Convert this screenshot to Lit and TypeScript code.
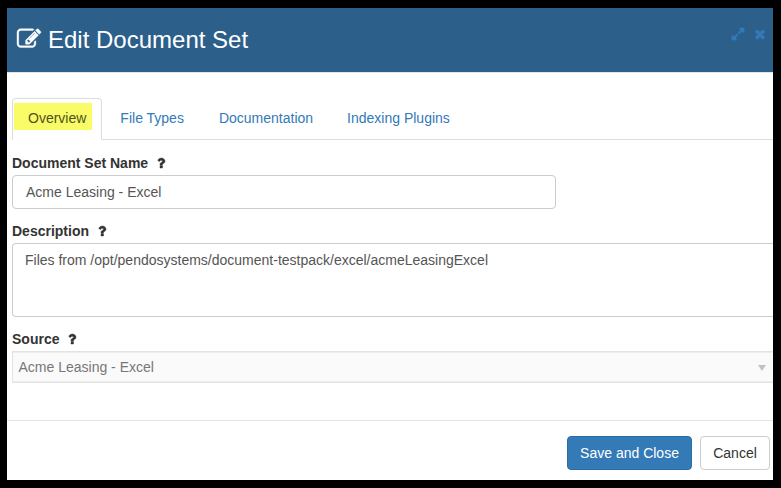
import { LitElement, html, css, svg } from "lit";
import { customElement, property, state } from "lit/decorators.js";

const ICONS: Record<string, string> = {
  edit: "M888 1184l116-116-152-152-116 116v56h96v96h56zm440-720q-16-16-33 1l-350 350q-17 17-1 33t33-1l350-350q17-17 1-33zm80 594v190q0 119-84.5 203.5t-203.5 84.5h-832q-119 0-203.5-84.5t-84.5-203.5v-832q0-119 84.5-203.5t203.5-84.5h832q63 0 117 25 15 7 18 23 3 17-9 29l-49 49q-14 14-32 8-23-6-45-6h-832q-66 0-113 47t-47 113v832q0 66 47 113t113 47h832q66 0 113-47t47-113v-126q0-13 9-22l64-64q15-15 35-7t20 29zm-96-738l288 288-672 672h-288v-288zm444 132l-92 92-288-288 92-92q28-28 68-28t68 28l152 152q28 28 28 68t-28 68z",
  help: "M1088 1256v240q0 16-12 28t-28 12h-240q-16 0-28-12t-12-28v-240q0-16 12-28t28-12h240q16 0 28 12t12 28zm316-600q0 54-15.5 101t-35 76.5-55 59.5-57.5 43.5-61 35.5q-41 23-68.5 65t-27.5 67q0 17-12 32.5t-28 15.5h-240q-15 0-25.5-18.5t-10.5-37.5v-45q0-83 65-156.5t143-108.5q59-27 84-56t25-76q0-42-46.5-74t-107.5-32q-65 0-108 29-35 25-107 115-13 16-31 16-12 0-25-8l-164-125q-13-10-15.5-25t5.5-28q160-266 464-266 80 0 161 31t146 83 106 127.5 41 158.5z",
  expand: "M883 1056q0 13-10 23l-332 332 144 144q19 19 19 45t-19 45-45 19h-448q-26 0-45-19t-19-45v-448q0-26 19-45t45-19 45 19l144 144 332-332q10-10 23-10t23 10l114 114q10 10 10 23zm781-864v448q0 26-19 45t-45 19-45-19l-144-144-332 332q-10 10-23 10t-23-10l-114-114q-10-10-10-23t10-23l332-332-144-144q-19-19-19-45t19-45 45-19h448q26 0 45 19t19 45z",
  close: "M1490 1322q0 40-28 68l-136 136q-28 28-68 28t-68-28l-294-294-294 294q-28 28-68 28t-68-28l-136-136q-28-28-28-68t28-68l294-294-294-294q-28-28-28-68t28-68l136-136q28-28 68-28t68 28l294 294 294-294q28-28 68-28t68 28l136 136q28 28 28 68t-28 68l-294 294 294 294q28 28 28 68z",
};

@customElement("ui-icon")
class UiIcon extends LitElement {
  @property() name = "";
  static styles = css`
    :host { display: block; width: 14px; height: 14px; flex: none; }
    svg { display: block; width: 100%; height: 100%; fill: currentColor; stroke: currentColor; stroke-width: var(--icon-stroke, 0); overflow: visible; }
  `;
  render() {
    return html`<svg viewBox="0 0 1792 1792" aria-hidden="true">${svg`<path d=${ICONS[this.name] ?? ""}></path>`}</svg>`;
  }
}

@customElement("field-label")
class FieldLabel extends LitElement {
  @property() text = "";
  static styles = css`
    :host { display: flex; align-items: center; height: 20px; gap: 6px; font-weight: bold; color: #333; --icon-stroke: 60; }
  `;
  render() {
    return html`<span>${this.text}</span><ui-icon name="help"></ui-icon>`;
  }
}

@customElement("app-root")
class AppRoot extends LitElement {
  @state() private active = "Overview";
  private tabs = ["Overview", "File Types", "Documentation", "Indexing Plugins"];

  static styles = css`
    :host {
      display: block; box-sizing: border-box; height: 488px;
      padding: 8px 8px 8px 7px; background: #000;
      font: 14px/20px "Liberation Sans", Arial, sans-serif; color: #333;
    }
    *, ui-icon { box-sizing: border-box; }
    .dialog { display: flex; flex-direction: column; height: 472px; background: #fff; overflow: hidden; }
    .header {
      display: flex; height: 65px; padding: 0 6px 0 10px; flex: none;
      background: #2c5f8a; border-bottom: 1px solid #e5e5e5; color: #fff;
    }
    .edit { width: 24px; height: 24px; margin-top: 19px; --icon-stroke: 30; }
    h1 { margin: 19px auto 0 7px; font-size: 24px; line-height: 26px; font-weight: normal; }
    .tools { display: flex; gap: 8px; padding-top: 19px; color: #337ab7; --icon-stroke: 90; }
    .body { flex: 1; padding: 25px 0 0 5px; }
    .tabs { display: flex; gap: 2px; height: 42px; border-bottom: 1px solid #ddd; }
    .tab {
      height: 42px; padding: 9px 15px; border: 1px solid transparent;
      border-radius: 4px 4px 0 0; color: #337ab7; cursor: pointer; white-space: nowrap;
    }
    .tab:nth-child(2) { padding-right: 16px; }
    .tab.active { padding: 4px 9px 0 1px; border-color: #ddd; border-bottom-color: #fff; color: #555; }
    .mark { display: block; height: 27px; padding: 5px 6px 0 14px; background: #f9fc67; color: #4f5020; }
    field-label { margin-top: 12px; }
    .tabs + field-label { margin-top: 13px; }
    .control { border: 1px solid #ccc; border-radius: 4px; color: #555; margin-top: 2px; }
    .name { width: 544px; height: 34px; padding: 6px 13px; }
    .description { height: 74px; padding: 6px 12px; border-right: 0; border-radius: 4px 0 0 4px; }
    .select {
      display: flex; align-items: center; justify-content: space-between;
      height: 32px; padding: 0 7px 0 5.5px; border: 1px solid #e3e3e3; border-right: 0;
      box-shadow: inset 0 1px #eee, inset 0 -1px #eee; border-radius: 1px 0 0 1px;
      background: #fafafa; color: #777;
    }
    .caret { border: 4px solid transparent; border-top: 6px solid #c2c2c2; border-bottom: 0; margin-top: 2px; }
    .footer {
      display: flex; justify-content: flex-end; gap: 8px; flex: none;
      height: 60px; padding: 15px 3px 0 0; border-top: 1px solid #e5e5e5;
    }
    button {
      height: 34px; width: 70px; padding: 0; border: 1px solid #ccc; border-radius: 4px;
      background: #fff; color: #333; font: inherit;
    }
    .primary { width: 125px; border-color: #2e6da4; background: #337ab7; color: #fff; }
  `;

  render() {
    return html`
      <div class="dialog">
        <div class="header">
          <ui-icon class="edit" name="edit"></ui-icon>
          <h1>Edit Document Set</h1>
          <div class="tools"><ui-icon name="expand"></ui-icon><ui-icon name="close"></ui-icon></div>
        </div>
        <div class="body">
          <div class="tabs">
            ${this.tabs.map((t) => t === this.active
              ? html`<div class="tab active"><span class="mark">${t}</span></div>`
              : html`<div class="tab" @click=${() => (this.active = t)}>${t}</div>`)}
          </div>
          <field-label text="Document Set Name"></field-label>
          <div class="control name">Acme Leasing - Excel</div>
          <field-label text="Description"></field-label>
          <div class="control description">Files from /opt/pendosystems/document-testpack/excel/acmeLeasingExcel</div>
          <field-label text="Source"></field-label>
          <div class="control select"><span>Acme Leasing - Excel</span><span class="caret"></span></div>
        </div>
        <div class="footer">
          <button class="primary">Save and Close</button>
          <button>Cancel</button>
        </div>
      </div>
    `;
  }
}
